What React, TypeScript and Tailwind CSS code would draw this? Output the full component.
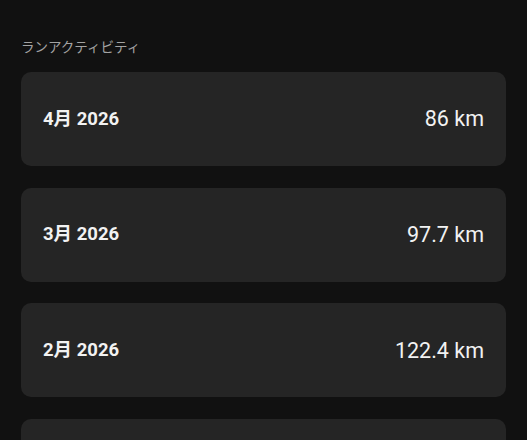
import React from "react";

const rows = [
  { label: "4月 2026", value: "86 km" },
  { label: "3月 2026", value: "97.7 km" },
  { label: "2月 2026", value: "122.4 km" },
];

export default function App() {
  return (
    <div
      className="w-[527px] h-[440px] overflow-hidden bg-[#111111] px-[21px] pt-[38px]"
      style={{ fontFamily: 'Roboto, "Noto Sans CJK JP", sans-serif' }}
    >
      <div className="text-[13.5px] leading-[18px] text-[#a3a3a3] mb-[16px]">ランアクティビティ</div>
      <div className="flex flex-col gap-[21.7px]">
        {rows.map((r) => (
          <div
            key={r.label}
            className="h-[94px] rounded-[10px] bg-[#252525] flex items-center justify-between px-[22px] pt-[1px]"
          >
            <span className="text-[18.5px] font-bold text-[#f2f2f2]">{r.label}</span>
            <span className="text-[21.5px] text-[#f2f2f2]">{r.value}</span>
          </div>
        ))}
        <div className="h-[94px] rounded-[10px] bg-[#252525]" />
      </div>
    </div>
  );
}
